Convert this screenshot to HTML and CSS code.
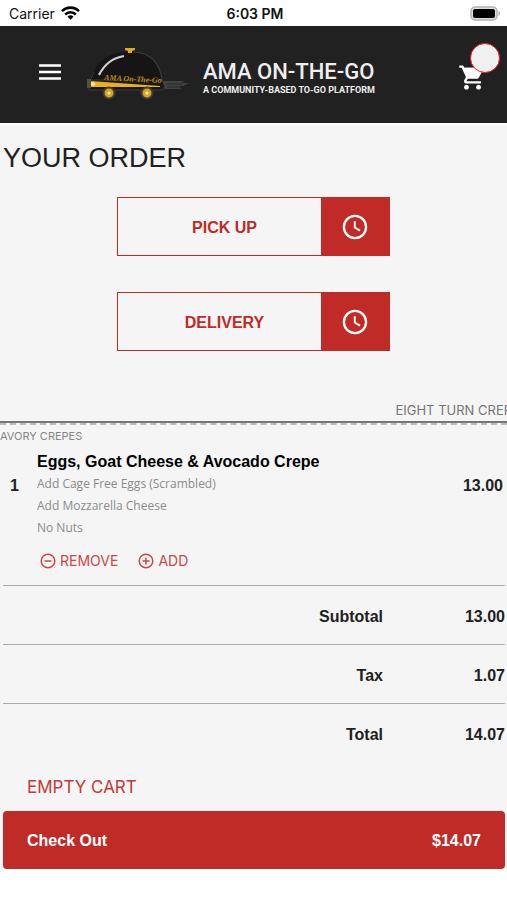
FILE: index.html
```html
<!DOCTYPE html>
<html lang="en">
<head>
<meta charset="utf-8">
<meta name="viewport" content="width=device-width, initial-scale=1">
<title>Your Order</title>
<link rel="stylesheet" href="styles.css">
</head>
<body>
<div class="status">
  <div class="carrier">
    <span>Carrier</span>
    <svg width="19" height="14" viewBox="0 0 19 14" aria-hidden="true"><g fill="none" stroke="#000" stroke-width="2.6"><path d="M1 5.2a12 12 0 0 1 17 0"/><path d="M4.2 8.5a7.4 7.4 0 0 1 10.6 0"/></g><path d="M6.5 10.7a4.300 4.300 0 0 1 6 0L9.500 13.800z"/></svg>
  </div>
  <time class="clock">6:03 PM</time>
  <div class="power">
    <svg width="31" height="15" viewBox="0 0 31 15" aria-hidden="true"><rect x="1" y="1" width="26" height="13" rx="4" fill="#ddd" stroke="#b4b4b4" stroke-width="1.500"/><rect x="3" y="3" width="22" height="9" rx="2"/><path d="M28.500 5c2.200 1 2.200 4 0 5z" fill="#b4b4b4"/></svg>
  </div>
</div>
<header class="bar">
  <button class="icon-button" type="button" aria-label="Menu">
    <svg width="22" height="16" viewBox="0 0 22 16" aria-hidden="true"><path d="M0 1.500h22M0 8h22M0 14.500h22" stroke="#fff" stroke-width="2.400"/></svg>
  </button>
  <a class="brand" href="#">
    <svg class="logo" width="102" height="54" viewBox="0 0 102 54" aria-hidden="true">
      <path d="M3 34C8 14 22 5 42 5s29 10 33 29z" fill="#161415"/>
      <path d="M47 5c16 1 26 10 28 28" fill="none" stroke="#3c3c3c" stroke-width="1.200"/>
      <path d="M4 32l3-7" stroke="#3c3c3c"/>
      <path d="M12 28C17 18 25 11 37 9" fill="none" stroke="#d0d0d0" stroke-width="2.200"/>
      <path d="M38 1h10v2l-3 1v2h-4V4l-3-1z" fill="#e2a81c"/>
      <path d="M1 33h74l3 6-2 4H2z" fill="#191919" stroke="#444" stroke-width=".8"/>
      <path d="M3 34l70 5v1H3z" fill="#eab024"/>
      <circle cx="6" cy="37" r="2" fill="#ffe7a0"/><path d="M0 32h4v9H0z" fill="#555036"/>
      <text x="17" y="33" class="logo-text" transform="rotate(3 17 33)">AMA On-The-Go</text>
      <path d="M76 34h22l-4 2h8l-6 3h-4l2 3H78z" fill="#424242"/><path d="M80 37h15M80 40h12" stroke="#282828"/>
      <g fill="#d9a320" stroke="#3b3b3b" stroke-width="2"><circle cx="22" cy="46" r="5.500"/><circle cx="60" cy="46" r="5.500"/></g>
      <circle cx="22" cy="46" r="1.600" fill="#fff0a0"/><circle cx="60" cy="46" r="1.600" fill="#fff0a0"/>
    </svg>
    <span class="brand-text"><span class="brand-name">AMA ON-THE-GO</span><span class="brand-tag">A COMMUNITY-BASED TO-GO PLATFORM</span></span>
  </a>
  <button class="icon-button cart" type="button" aria-label="Cart">
    <svg width="29" height="29" viewBox="0 0 24 24" fill="#fff" aria-hidden="true"><path d="M7 18c-1.100 0-1.990.9-1.990 2S5.900 22 7 22s2-.9 2-2-.9-2-2-2zM1 2v2h2l3.600 7.590-1.350 2.450c-.16.280-.25.610-.25.960 0 1.100.9 2 2 2h12v-2H7.420c-.14 0-.25-.11-.25-.25l.03-.12.900-1.630h7.450c.750 0 1.410-.41 1.750-1.030l3.580-6.490A1 1 0 0 0 20 4H5.210l-.94-2H1zm16 16c-1.100 0-1.990.9-1.990 2s.89 2 1.990 2 2-.9 2-2-.9-2-2-2z"/><path d="M5 4h15l-4 8H8z"/></svg>
    <span class="badge"></span>
  </button>
</header>
<main>
  <h1>YOUR ORDER</h1>
  <div class="methods">
    <button class="method" type="button"><span class="method-name">PICK UP</span><span class="method-icon"><svg width="28" height="28" viewBox="0 0 24 24" fill="none" stroke="#fff" stroke-width="2" aria-hidden="true"><circle cx="12" cy="12" r="9.500"/><path d="M11.800 7v5.500l4.500 2.600" stroke-width="1.600"/></svg></span></button>
    <button class="method" type="button"><span class="method-name">DELIVERY</span><span class="method-icon"><svg width="28" height="28" viewBox="0 0 24 24" fill="none" stroke="#fff" stroke-width="2" aria-hidden="true"><circle cx="12" cy="12" r="9.500"/><path d="M11.800 7v5.500l4.500 2.600" stroke-width="1.600"/></svg></span></button>
  </div>
  <div class="vendor"><span>EIGHT TURN CREP</span></div>
  <h2 class="category">AVORY CREPES</h2>
  <section class="item">
    <span class="qty">1</span>
    <div class="details">
      <h3>Eggs, Goat Cheese &amp; Avocado Crepe</h3>
      <ul><li>Add Cage Free Eggs (Scrambled)</li><li>Add Mozzarella Cheese</li><li>No Nuts</li></ul>
    </div>
    <span class="price">13.00</span>
  </section>
  <div class="actions">
    <button type="button"><svg width="16" height="16" viewBox="0 0 16 16" fill="none" stroke="currentColor" stroke-width="1.500" aria-hidden="true"><circle cx="8" cy="8" r="6.800"/><path d="M4.500 8h7"/></svg>REMOVE</button>
    <button type="button"><svg width="16" height="16" viewBox="0 0 16 16" fill="none" stroke="currentColor" stroke-width="1.500" aria-hidden="true"><circle cx="8" cy="8" r="6.800"/><path d="M4.500 8h7M8 4.500v7"/></svg>ADD</button>
  </div>
  <table class="totals">
    <tbody>
      <tr><th scope="row">Subtotal</th><td>13.00</td></tr>
      <tr><th scope="row">Tax</th><td>1.07</td></tr>
      <tr><th scope="row">Total</th><td>14.07</td></tr>
    </tbody>
  </table>
  <button class="empty" type="button">EMPTY CART</button>
  <button class="checkout" type="button"><span>Check Out</span><span>$14.07</span></button>
</main>
</body>
</html>
```
FILE: styles.css
```css
* { box-sizing: border-box; }

body {
  margin: 0;
  background: #fff;
  color: #212121;
  font-family: "Liberation Sans", Arial, sans-serif;
  font-size: 16px;
}

button {
  margin: 0;
  padding: 0;
  border: 0;
  background: none;
  color: inherit;
  font: inherit;
  cursor: pointer;
}

svg { display: block; flex: none; }
h1, h2, h3, ul { margin: 0; padding: 0; }

.status {
  display: grid;
  grid-template-columns: 1fr auto 1fr;
  align-items: center;
  height: 26px;
  padding: 0 6px 0 9px;
  color: #111;
  font-family: Inter, sans-serif;
  font-size: 14px;
}
.carrier { display: flex; align-items: center; gap: 6px; }
.clock { font-weight: 600; }
.power { display: flex; justify-content: flex-end; }

.bar {
  display: flex;
  align-items: center;
  height: 99px;
  padding: 0 20px 6px 39px;
  background: #212121;
  border-bottom: 2px solid #fff;
}
.icon-button { position: relative; }
.brand {
  display: flex;
  align-items: center;
  gap: 14px;
  flex: 1;
  margin-left: 26px;
  padding-top: 5px;
  color: #eee;
  text-decoration: none;
}
.logo-text { font: italic 700 8px "Liberation Serif", serif; fill: #b98516; }
.brand-text { display: flex; flex-direction: column; padding-top: 8px; white-space: nowrap; }
.brand-name { font: 500 22px/24px Roboto, sans-serif; }
.brand-tag { font: 700 9px/12px Roboto, sans-serif; }
.cart { padding-top: 12px; }
.badge {
  position: absolute;
  top: -8px;
  right: -13px;
  width: 30px;
  height: 30px;
  border: 1px solid #f01818;
  border-radius: 50%;
  background: #f0f0f0;
}

main { padding-top: 17px; background: #f5f5f5; overflow: hidden; }
h1 { padding-left: 3px; font-size: 27px; font-weight: 400; line-height: 32px; }

.methods { display: flex; flex-direction: column; align-items: center; gap: 36px; margin-top: 23px; }
.method {
  display: grid;
  grid-template-columns: 3fr 1fr;
  width: 54%;
  height: 59px;
  border: 1px solid #c02b27;
  color: #c02b27;
  font-weight: 700;
}
.method-name, .method-icon { display: flex; align-items: center; justify-content: center; height: 100%; }
.method-name { padding: 2px 0 0 10px; }
.method-icon { background: #c02b27; }

.vendor {
  display: flex;
  margin-top: 49px;
  padding: 0 0 1px 78%;
  border-bottom: 2px solid #777;
  color: #757575;
  font: 13px/20px Inter, sans-serif;
  white-space: nowrap;
}
.category {
  padding-top: 1px;
  border-top: 2px dashed #bbb;
  color: #858585;
  font: 11px/20px Inter, sans-serif;
}

.item { display: flex; align-items: center; padding: 5px 4px 0 10px; }
.qty { width: 27px; font-weight: 700; }
.details { flex: 1; }
h3 { color: #000; font-size: 16px; line-height: 22px; }
ul { list-style: none; color: #8b8b8b; font: 12px/22px "Open Sans", sans-serif; }
.qty, .price { align-self: flex-start; margin-top: 24px; line-height: 22px; }
.price { font-weight: 700; }

.actions { display: flex; gap: 20px; margin-top: 11px; padding-left: 40px; }
.actions button {
  display: flex;
  align-items: center;
  gap: 4px;
  height: 22px;
  color: #cc4743;
  font: 14px/20px Inter, sans-serif;
}

.totals { width: calc(100% - 5px); margin: 13px 2px 0 3px; border-collapse: collapse; font-weight: 700; }
.totals tr { height: 59px; border-top: 1px solid #aaa; }
.totals th, .totals td { padding: 3px 0 0; text-align: right; }
.totals td { width: 122px; }

.empty { display: block; height: 48px; padding-left: 27px; color: #c43a36; font: 17px/20px Inter, sans-serif; }
.checkout {
  display: flex;
  align-items: center;
  justify-content: space-between;
  width: calc(100% - 5px);
  height: 58px;
  margin-left: 3px;
  padding: 2px 24px 0;
  border-radius: 4px;
  background: #c02b27;
  color: #fff;
  font-weight: 700;
}
```
